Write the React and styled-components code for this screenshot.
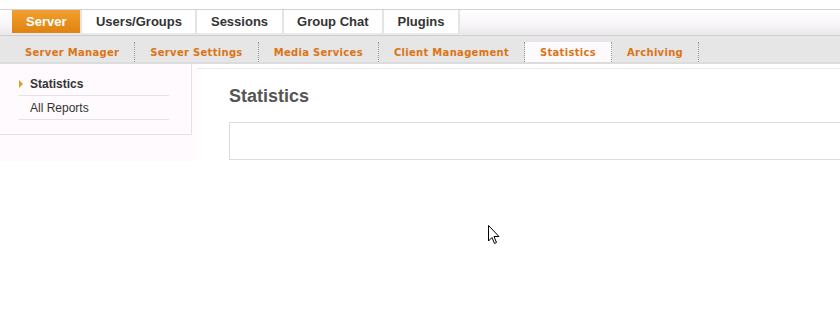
import React from 'react';
import styled, { createGlobalStyle } from 'styled-components';

// orange: #e8891c / text orange: #d9700f

const GlobalStyle = createGlobalStyle`
  body {
    margin: 0;
    background: #fff;
    font-family: "Liberation Sans", Arial, sans-serif;
  }
`

const Page = styled.div`
  position: relative;
  width: 840px;
  height: 317px;
  overflow: hidden;
  padding-top: 9px;
  box-sizing: border-box;
`

const TabBar = styled.div`
  display: flex;
  height: 25px;
  padding-left: 12px;
  border-top: 1px solid #d2d2d2;
  border-bottom: 1px solid #cfcfcf;
  background: linear-gradient(#ffffff, #f7f5f7 60%, #e9e7e9);
`

const Tab = styled.div`
  display: flex;
  align-items: center;
  height: 22px;
  padding: 0 ${p => (p.active ? '14px' : '13.5px')} 1px;
  font-size: 13px;
  font-weight: bold;
  color: ${p => (p.active ? '#fff' : '#333')};
  background: ${p => (p.active ? 'linear-gradient(#f0a030, #e0820f)' : '#fff')};
  border-right: 2px solid #e4e4e4;
`

const SubNav = styled.div`
  display: flex;
  align-items: flex-end;
  height: 26px;
  padding-left: 10px;
  background: #e6e6e6;
  border-bottom: 2px solid #dcdcdc;
`

const SubItem = styled.div`
  display: flex;
  align-items: center;
  height: 20px;
  padding: 0 15px;
  font-family: "DejaVu Sans", Verdana, sans-serif;
  font-size: 10px;
  letter-spacing: 0.3px;
  font-weight: bold;
  color: #dc7414;
  border-right: 1px dotted #8a9aa6;
  background: ${p => (p.active ? '#fdfafd' : 'transparent')};
`

const Body = styled.div`
  display: flex;
  align-items: flex-start;
`

const SideArea = styled.div`
  width: 197px;
  height: 97px;
  background: #fefafd;
  flex-shrink: 0;
`

const SidePanel = styled.div`
  width: 192px;
  height: 71px;
  box-sizing: border-box;
  padding: 8px 22px 0 19px;
  border-right: 1px solid #e4e2e4;
  border-bottom: 1px solid #e4e2e4;
`

const SideLink = styled.div`
  display: flex;
  align-items: center;
  height: 23px;
  padding-left: 11px;
  position: relative;
  font-size: 12px;
  font-weight: ${p => (p.current ? 'bold' : 'normal')};
  color: #333;
  border-bottom: 1px solid #e4e2e4;
`

const Arrow = styled.span`
  position: absolute;
  left: 0;
  top: 8px;
  width: 0;
  height: 0;
  border-top: 4px solid transparent;
  border-bottom: 4px solid transparent;
  border-left: 4px solid #d7a21c;
`

const Main = styled.div`
  flex: 1;
  margin-top: 4px;
  border-top: 1px solid #ececec;
  padding: 16px 0 0 32px;
`

const Title = styled.h1`
  margin: 0 0 14px;
  font-size: 18px;
  font-weight: bold;
  color: #555;
  line-height: 23px;
`

const Box = styled.div`
  height: 36px;
  border: 1px solid #dcdcdc;
  border-right: none;
`

const Cursor = styled.svg`
  position: absolute;
  left: 488px;
  top: 225px;
`

const tabs = ['Server', 'Users/Groups', 'Sessions', 'Group Chat', 'Plugins'];
const subs = ['Server Manager', 'Server Settings', 'Media Services', 'Client Management', 'Statistics', 'Archiving'];

export default function App() {
  return (
    <Page>
      <GlobalStyle />
      <TabBar>
        {tabs.map((t, i) => (
          <Tab key={t} active={i === 0}>{t}</Tab>
        ))}
      </TabBar>
      <SubNav>
        {subs.map(s => (
          <SubItem key={s} active={s === 'Statistics'}>{s}</SubItem>
        ))}
      </SubNav>
      <Body>
        <SideArea>
          <SidePanel>
            <SideLink current><Arrow />Statistics</SideLink>
            <SideLink>All Reports</SideLink>
          </SidePanel>
        </SideArea>
        <Main>
          <Title>Statistics</Title>
          <Box />
        </Main>
      </Body>
      <Cursor width="13" height="21" viewBox="0 0 13 21">
        <path d="M0.5 0.5 L0.5 16 L4 12.5 L6.5 18.5 L8.5 17.5 L6 11.5 L11 11.5 Z" fill="#fff" stroke="#000" strokeWidth="1" />
      </Cursor>
    </Page>
  );
}
